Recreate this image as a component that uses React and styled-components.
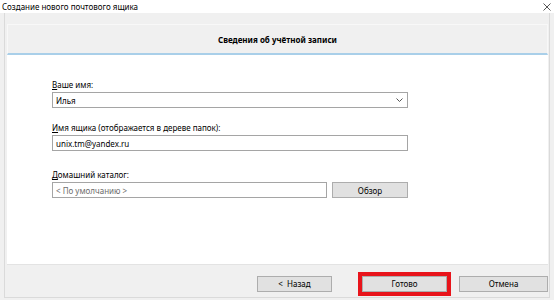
import styled, { createGlobalStyle } from "styled-components";

const Global = createGlobalStyle`
  *, *::before, *::after { box-sizing: border-box; }
  html, body { margin: 0; padding: 0; }
  body {
    width: 554px;
    height: 300px;
    overflow: hidden;
    font-family: "Noto Sans", "Liberation Sans", sans-serif;
    font-size: 8px;
    color: #000;
    background: #f0f0f0;
  }
`;

const Window = styled.div`
  width: 554px;
  height: 300px;
  display: flex;
  flex-direction: column;
  background: #f0f0f0;
`;

const TitleBar = styled.div`
  height: 13px;
  flex: none;
  background: #fff;
  display: flex;
  align-items: center;
  justify-content: space-between;
  padding: 0 3px 0 2px;
  font-size: 8px;
`;

const Frame = styled.div`
  flex: 1;
  margin: 0 4px 2px 4px;
  border: 1px solid #dadada;
  border-top: none;
  display: flex;
  flex-direction: column;
  padding: 11px 1px 0 2px;
`;

const Header = styled.div`
  height: 31px;
  flex: none;
  display: flex;
  align-items: center;
  justify-content: center;
  background: #f0f0f0;
  border: 1px solid #f8f8f8;
  border-bottom: 2px solid #a9cfe9;
  font-weight: bold;
  font-size: 8px;
`;

const Content = styled.div`
  height: 210px;
  flex: none;
  background: #fff;
  border-bottom: 1px solid #e3e3e3;
  padding: 24px 0 0 45px;
  display: flex;
  flex-direction: column;
`;

const Field = styled.div`
  display: flex;
  flex-direction: column;
  gap: 2px;
  margin-bottom: ${p => p.$after || 0}px;
`;

const Label = styled.label`
  font-size: 8px;
  line-height: 11px;
  u { text-decoration: underline; }
`;

const Row = styled.div`
  display: flex;
  gap: 5px;
`;

const Box = styled.div`
  width: ${p => p.$w}px;
  height: 16px;
  border: 1px solid #a5a5a5;
  background: #fff;
  display: flex;
  align-items: center;
  justify-content: space-between;
  padding: 0 4px 0 3px;
  font-size: 8px;
  color: ${p => (p.$muted ? "#6d6d6d" : "#000")};
`;

const Button = styled.button`
  width: ${p => p.$w}px;
  height: 16px;
  border: 1px solid #adadad;
  background: #e1e1e1;
  font-family: inherit;
  font-size: 8px;
  color: #000;
  padding: 0;
  white-space: pre;
`;

const Footer = styled.div`
  flex: 1;
  display: flex;
  justify-content: flex-end;
  align-items: center;
  padding: 5px 0 0 0;
`;

const Highlight = styled.div`
  border: 4px solid #e8141b;
  display: flex;
  margin: 0 8px 0 26px;
`;

const Chevron = () => (
  <svg width="7" height="4" viewBox="0 0 7 4">
    <path d="M0.5 0.5 L3.5 3.5 L6.5 0.5" fill="none" stroke="#555" strokeWidth="1" />
  </svg>
);

const CloseIcon = () => (
  <svg width="8" height="8" viewBox="0 0 8 8">
    <path d="M0.5 0.5 L7.5 7.5 M7.5 0.5 L0.5 7.5" stroke="#444" strokeWidth="0.9" />
  </svg>
);

export default function App() {
  return (
    <>
      <Global />
      <Window>
        <TitleBar>
          <span>Создание нового почтового ящика</span>
          <CloseIcon />
        </TitleBar>
        <Frame>
          <Header>Сведения об учётной записи</Header>
          <Content>
            <Field $after={14}>
              <Label><u>В</u>аше имя:</Label>
              <Box $w={356}>
                <span>Илья</span>
                <Chevron />
              </Box>
            </Field>
            <Field $after={18}>
              <Label><u>И</u>мя ящика (отображается в дереве папок):</Label>
              <Box $w={356}>unix.tm@yandex.ru</Box>
            </Field>
            <Field>
              <Label><u>Д</u>омашний каталог:</Label>
              <Row>
                <Box $w={275} $muted>&lt; По умолчанию &gt;</Box>
                <Button $w={76}>Обзор</Button>
              </Row>
            </Field>
          </Content>
          <Footer>
            <Button $w={75}>{"<  Назад"}</Button>
            <Highlight>
              <Button $w={85}>Готово</Button>
            </Highlight>
            <Button $w={89}>Отмена</Button>
          </Footer>
        </Frame>
      </Window>
    </>
  );
}
